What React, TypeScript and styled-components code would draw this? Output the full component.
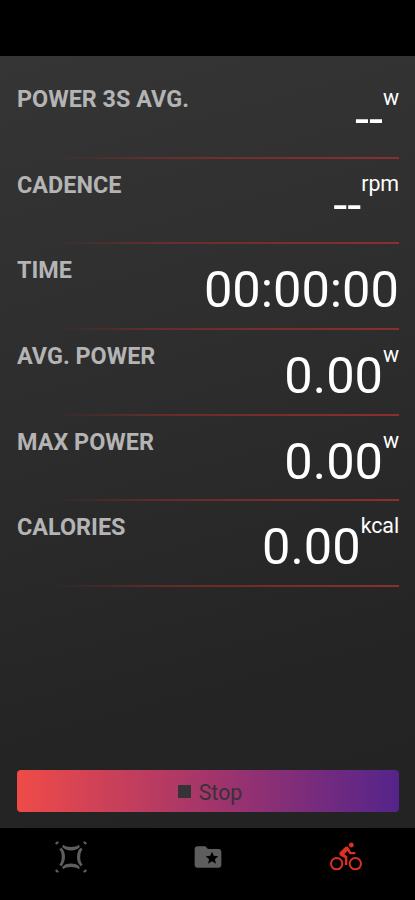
import React from "react";
import styled, { createGlobalStyle } from "styled-components";

const GlobalStyle = createGlobalStyle`
  * { box-sizing: border-box; }
  body { margin: 0; background: #000; font-family: Roboto, "Liberation Sans", sans-serif; }
`;

const Screen = styled.div`
  display: flex;
  flex-direction: column;
  height: 900px;
  overflow: hidden;
  background: #000;
`;

const StatusBar = styled.header`
  flex: 0 0 56px;
  background: #000;
`;

const Content = styled.main`
  flex: 1;
  min-height: 0;
  display: flex;
  flex-direction: column;
  justify-content: space-between;
  padding: 17px 16px 16px 17px;
  background: linear-gradient(165deg, #353535 0%, #2d2d2d 42%, #242424 80%, #232323 100%);
`;

const MetricRow = styled.section`
  display: flex;
  justify-content: space-between;
  align-items: flex-start;
  height: 85.7px;
  padding-top: 12px;
  position: relative;

  &::after {
    content: "";
    position: absolute;
    left: 0;
    right: 0;
    bottom: 0;
    height: 2px;
    background: linear-gradient(90deg, rgba(140, 44, 40, 0) 9%, rgba(140, 44, 40, 0.6) 38%, #8c2f2d 100%);
  }
`;

const Label = styled.h2`
  margin: 0;
  font-size: 23.4px;
  font-weight: 700;
  line-height: 28px;
  color: #b4b4b4;
  white-space: nowrap;
`;

const Reading = styled.div`
  display: flex;
  align-items: flex-start;
  color: #fff;
`;

const Value = styled.span`
  font-size: 50.6px;
  line-height: 60px;
  padding-top: 4px;
`;

const Unit = styled.span`
  font-size: 21.4px;
  line-height: 26px;
  letter-spacing: -0.1px;
`;

const StopButton = styled.button`
  display: flex;
  align-items: center;
  justify-content: center;
  gap: 8px;
  height: 42px;
  padding: 2px 0 0 4px;
  border: 0;
  border-radius: 4px;
  background: linear-gradient(90deg, #ef4b48 0%, #a1346c 52%, #54248b 100%);
  color: #3a3039;
  font-family: inherit;
  font-size: 21.4px;
`;

const StopMark = styled.span`
  width: 13px;
  height: 13px;
  margin-bottom: 2px;
  background: #343336;
`;

const NavBar = styled.nav`
  flex: 0 0 72px;
  display: grid;
  grid-template-columns: repeat(3, 1fr);
  justify-items: center;
  align-items: start;
  padding: 12.5px 0 0 2px;
  background: #000;
`;

const NavIcon = styled.svg<{ $active?: boolean }>`
  width: 32px;
  height: 32px;
  display: block;
  color: ${(p) => (p.$active ? "#dc3022" : "#5f5e5f")};
`;

const metrics = [
  { label: "POWER 3S AVG.", value: "--", unit: "w" },
  { label: "CADENCE", value: "--", unit: "rpm" },
  { label: "TIME", value: "00:00:00", unit: "" },
  { label: "AVG. POWER", value: "0.00", unit: "w" },
  { label: "MAX POWER", value: "0.00", unit: "w" },
  { label: "CALORIES", value: "0.00", unit: "kcal" },
];

export default function App() {
  return (
    <Screen>
      <GlobalStyle />
      <StatusBar />
      <Content>
        <div>
          {metrics.map((m) => (
            <MetricRow key={m.label}>
              <Label>{m.label}</Label>
              <Reading>
                <Value>{m.value}</Value>
                {m.unit && <Unit>{m.unit}</Unit>}
              </Reading>
            </MetricRow>
          ))}
        </div>
        <StopButton>
          <StopMark />
          Stop
        </StopButton>
      </Content>
      <NavBar>
        <NavIcon viewBox="0 0 32 32" fill="currentColor">
          <path d="M8.200 3.800C11 6.800 21 6.800 23.800 3.800L24.800 6C21.500 10.600 10.500 10.600 7.200 6Z" />
          <path d="M8.200 28.200C11 25.200 21 25.200 23.800 28.200L24.800 26C21.500 21.400 10.500 21.400 7.200 26Z" />
          <path d="M4.300 8.200C7.600 11.500 7.600 20.500 4.300 23.800L6.400 25.200C11.200 21 11.200 11 6.400 6.800Z" />
          <path d="M27.700 8.200C24.400 11.500 24.400 20.500 27.700 23.800L25.600 25.200C20.800 21 20.800 11 25.600 6.800Z" />
          <path d="M0 2.400Q.8.600 3 .2L3.900 1.600L1.600 3.700ZM32 2.400Q31.200.6 29 .2L28.100 1.600L30.400 3.700ZM0 29.600Q.8 31.400 3 31.800L3.900 30.400L1.600 28.300ZM32 29.600Q31.200 31.400 29 31.800L28.100 30.400L30.400 28.300Z" />
        </NavIcon>
        <NavIcon viewBox="0 0 24 24" fill="currentColor">
          <path d="M20 6h-8l-2-2H4c-1.100 0-2 .9-2 2v12c0 1.100.9 2 2 2h16c1.100 0 2-.9 2-2V8c0-1.100-.9-2-2-2zm-2.060 11L15 15.280 12.060 17l.78-3.330-2.590-2.240 3.410-.29L15 8l1.340 3.140 3.410.29-2.590 2.240.78 3.330z" />
        </NavIcon>
        <NavIcon $active viewBox="0 0 24 24" fill="currentColor">
          <path d="M5 20.500A3.500 3.500 0 0 1 1.500 17 3.500 3.500 0 0 1 5 13.500 3.500 3.500 0 0 1 8.500 17 3.500 3.500 0 0 1 5 20.500M5 12a5 5 0 0 0-5 5 5 5 0 0 0 5 5 5 5 0 0 0 5-5 5 5 0 0 0-5-5m9.800-2H19V8.200h-3.200l-1.940-3.270c-.29-.5-.86-.83-1.460-.83-.47 0-.9.190-1.200.5L7.500 8.290C7.190 8.600 7 9 7 9.500c0 .63.33 1.160.85 1.470L11.200 13v5H13v-6.500l-2.250-1.650 2.320-2.350M19 20.500a3.500 3.500 0 0 1-3.500-3.500 3.500 3.500 0 0 1 3.500-3.500 3.500 3.500 0 0 1 3.500 3.500 3.500 3.500 0 0 1-3.500 3.500m0-8.500a5 5 0 0 0-5 5 5 5 0 0 0 5 5 5 5 0 0 0 5-5 5 5 0 0 0-5-5m-3-7.200c1 0 1.800-.8 1.800-1.800S17 1.200 16 1.200 14.200 2 14.200 3 15 4.800 16 4.800z" />
        </NavIcon>
      </NavBar>
    </Screen>
  );
}
